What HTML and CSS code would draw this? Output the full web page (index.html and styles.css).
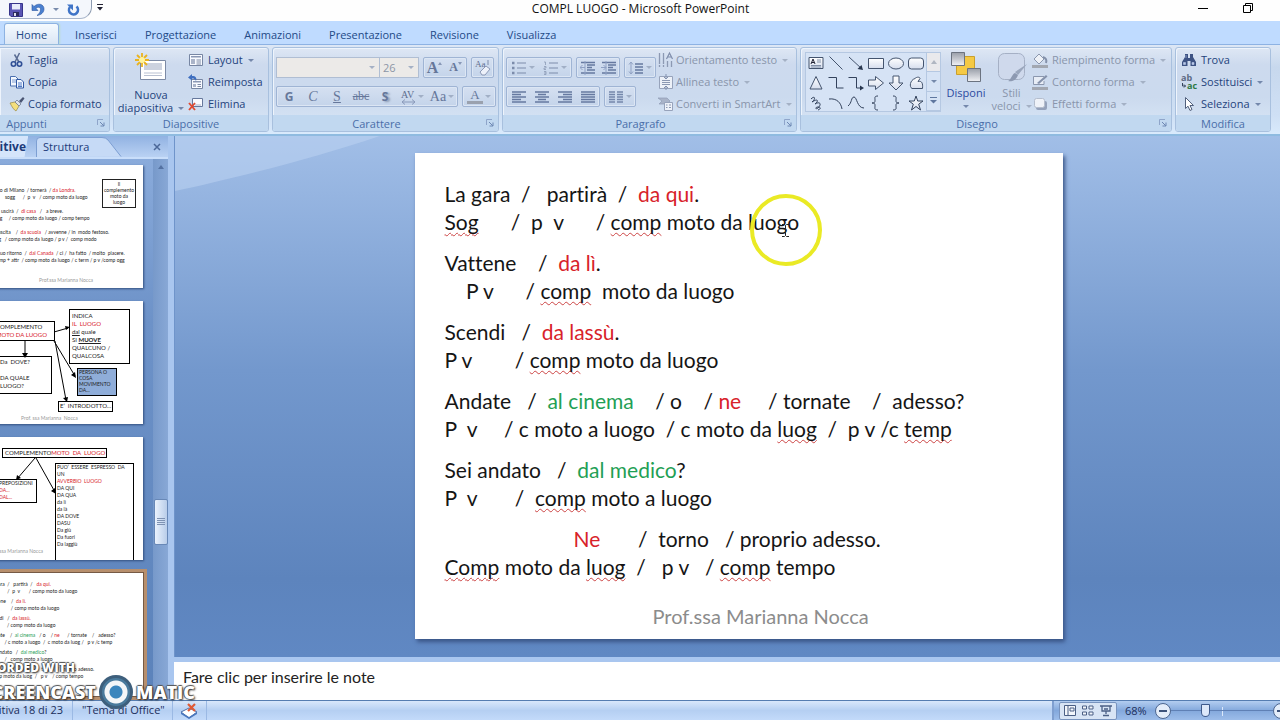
FILE: index.html
```
<!DOCTYPE html>
<html lang="it">
<head>
<meta charset="utf-8">
<title>COMPL LUOGO - Microsoft PowerPoint</title>
<link rel="stylesheet" href="styles.css">
</head>
<body>
<svg class="defs" aria-hidden="true">
  <defs>
    <linearGradient id="shade" x1="0" y1="0" x2="0" y2="1"><stop offset="0" stop-color="#fff"/><stop offset="1" stop-color="#d5dded"/></linearGradient>
    <linearGradient id="metal" x1="0" y1="0" x2="0" y2="1"><stop offset="0" stop-color="#999ea8"/><stop offset="1" stop-color="#f1f2f5"/></linearGradient>
    <symbol id="lines-left" viewBox="0 0 16 14"><path d="M1 2h14M1 4.500h9M1 7h14M1 9.500h9M1 12h14" stroke="#6679a0" stroke-width="1.400"/></symbol>
    <symbol id="lines-center" viewBox="0 0 16 14"><path d="M1 2h14M4 4.500h8M1 7h14M4 9.500h8M1 12h14" stroke="#6679a0" stroke-width="1.400"/></symbol>
    <symbol id="lines-right" viewBox="0 0 16 14"><path d="M1 2h14M6 4.500h9M1 7h14M6 9.500h9M1 12h14" stroke="#6679a0" stroke-width="1.400"/></symbol>
    <symbol id="lines-full" viewBox="0 0 16 14"><path d="M1 2h14M1 4.500h14M1 7h14M1 9.500h14M1 12h14" stroke="#6679a0" stroke-width="1.400"/></symbol>
    <symbol id="bullets" viewBox="0 0 16 14"><path d="M6 2h9M6 7h9M6 12h9" stroke="#7c8cab"/><path d="M1 2h2.500M1 7h2.500M1 12h2.500" stroke="#7c8cab" stroke-width="2.500"/></symbol>
    <symbol id="numbers" viewBox="0 0 16 14"><path d="M6 2h9M6 7h9M6 12h9" stroke="#7c8cab"/><path d="M1 1h1.500v3M1 5.500h2v1.500h-2v1.500h2M1 10.500h2v3h-2M1 12h2" stroke="#8c9ab5" fill="none" stroke-width=".8"/></symbol>
    <symbol id="indent-less" viewBox="0 0 16 14"><path d="M1 1.500h14M7 4h8M7 6.500h5M7 9h8M1 12h14" stroke="#6679a0" stroke-width="1.300"/><path d="M5 6.500H0M2.500 4L0 6.500 2.500 9M5 0v14" stroke="#8fa1c4" fill="none"/></symbol>
    <symbol id="indent-more" viewBox="0 0 16 14"><path d="M1 1.500h14M7 4h8M7 6.500h5M7 9h8M1 12h14" stroke="#6679a0" stroke-width="1.300"/><path d="M0 6.500h5M2.500 4L5 6.500 2.500 9M5 0v14" stroke="#8fa1c4" fill="none"/></symbol>
    <symbol id="spacing" viewBox="0 0 16 14"><path d="M7 3h8M7 6h8M7 9h8M7 12h8" stroke="#6679a0" stroke-width="1.300"/><path d="M3 1v12M1 3.500L3 1l2 2.500M1 10.500L3 13l2-2.500" stroke="#8fa1c4" fill="none"/></symbol>
    <symbol id="columns" viewBox="0 0 16 14"><path d="M1 2h6M1 4.500h6M1 7h6M1 9.500h6M1 12h6M9 2h6M9 4.500h6M9 7h6M9 9.500h6M9 12h6" stroke="#7487ab" stroke-width="1.400"/></symbol>
    <symbol id="launch" viewBox="0 0 8 8"><path d="M.5 6V.5H6" stroke="#8fa5ca" fill="none"/><path d="M3 3l4 4M7 3.500V7H3.500" stroke="#6d87b3" fill="none"/></symbol>
  </defs>
</svg>

<div class="app">
  <header class="titlebar">
    <div class="quick">
      <button aria-label="Salva"><svg width="14" height="14" viewBox="0 0 14 14"><path d="M.5.5h13v13H2l-1.500-1.500z" fill="#5a55b4" stroke="#37358a"/><path d="M3 1h8v5.500H3z" fill="#e8ecfa"/><path d="M4 9h6v4H4z" fill="#2b2a5e"/><path d="M5 10h2v3H5z" fill="#dde"/></svg></button>
      <button aria-label="Annulla"><svg width="14" height="14" viewBox="0 0 14 14"><path d="M1 1.500v6h6L5 5.500C7 3.500 9.500 4 9.500 6.500 9.500 9 8 11 6 12.500 10 12 13 9.500 13 6 13 1 7-.5 3 3.500z" fill="#4a80d0" stroke="#2a56a0" stroke-width=".6"/></svg></button>
      <i class="caret small"></i>
      <button aria-label="Ripeti" class="redo"><svg width="13" height="14" viewBox="0 0 13 14"><path d="M9.500 3.500a4.500 4.500 0 1 1-6.500.5" fill="none" stroke="#3f74c7" stroke-width="2.600"/><path d="M0 1.500h6v6z" fill="#3f74c7"/></svg></button>
    </div>
    <button class="customize" aria-label="Personalizza barra"><svg width="6" height="7" viewBox="0 0 6 7"><path d="M0 .5h6" stroke="#223"/><path d="M0 3h6L3 6.500z" fill="#223"/></svg></button>
    <h1 class="doc-title">COMPL LUOGO - Microsoft PowerPoint</h1>
    <div class="window-buttons">
      <button aria-label="Riduci a icona"><svg width="10" height="10" viewBox="0 0 10 10"><path d="M0 5.500h10" stroke="#000"/></svg></button>
      <button aria-label="Ripristina"><svg width="10" height="10" viewBox="0 0 10 10"><path d="M.5 2.500h7v7h-7zM2.500 2V.5h7v7H8" fill="none" stroke="#000"/></svg></button>
    </div>
  </header>

  <nav class="tabs">
    <button class="tab active">Home</button><button class="tab">Inserisci</button><button class="tab">Progettazione</button><button class="tab">Animazioni</button><button class="tab">Presentazione</button><button class="tab">Revisione</button><button class="tab">Visualizza</button>
  </nav>

  <div class="ribbon">
    <section class="group clipboard">
      <div class="tools column">
        <button class="cmd"><svg width="16" height="16" viewBox="0 0 16 16"><path d="M10.500 1L6 10M5.500 2.500L10 10" stroke="#5a6c92" stroke-width="1.500"/><circle cx="4.500" cy="12" r="2.200" fill="none" stroke="#2f4f96" stroke-width="1.600"/><circle cx="10.500" cy="12" r="2.200" fill="none" stroke="#2f4f96" stroke-width="1.600"/></svg>Taglia</button>
        <button class="cmd"><svg width="16" height="16" viewBox="0 0 16 16"><path d="M1.500 2.500h5l2.500 2.500v7H1.500z" fill="#f4f8ff" stroke="#4a6fb0"/><path d="M3 6h4M3 8h4" stroke="#7f9cd0"/><path d="M7.500 5.500h4.500l2.500 2.500v6H7.500z" fill="#f4f8ff" stroke="#2f57a3"/><path d="M9 9h4M9 11h4M9 12.500h4" stroke="#4f79c4"/></svg>Copia</button>
        <button class="cmd"><svg width="16" height="16" viewBox="0 0 16 16"><path d="M1 7l5-1 4 4-3 5C5 14 3 11 1 7z" fill="#f4df7d" stroke="#9a8a45" stroke-width=".7"/><path d="M6 6l2-2 4 4-2 2z" fill="#dfe3ea" stroke="#66708a" stroke-width=".7"/><path d="M10 5l4-4 1.500 1.500L12 7z" fill="#4a5572"/></svg>Copia formato</button>
      </div>
      <footer class="group-name"><span>Appunti</span><button aria-label="Opzioni Appunti"><svg width="8" height="8"><use href="#launch"/></svg></button></footer>
    </section>

    <section class="group slides">
      <div class="tools">
        <button class="big"><svg width="32" height="30" viewBox="0 0 32 30"><path d="M5.500 7.500h25v19h-25z" fill="#fff" stroke="#7c8aa5"/><path d="M9 10h18v7H9z" fill="#ccd2df"/><path d="M9 20h18M9 22.500h18" stroke="#b9c1d2"/><path d="M7 0v14M0 7h14M2 2l10 10M12 2L2 12" stroke="#eab31f" stroke-width="1.800"/><circle cx="7" cy="7" r="3" fill="#fff4a0"/></svg><span>Nuova<br>diapositiva<i class="caret"></i></span></button>
        <div class="column">
          <button class="cmd"><svg width="16" height="16" viewBox="0 0 16 16"><path d="M1.500 2.500h13v11h-13z" fill="#f8faff" stroke="#7786a3"/><path d="M3 4h10v1.500H3z" fill="#8b98b4"/><path d="M3 7h4v5H3z" fill="#aab4c9"/><path d="M8.500 8H13M8.500 10H13M8.500 12H13" stroke="#7d8aa6"/></svg><span>Layout<i class="caret"></i></span></button>
          <button class="cmd"><svg width="16" height="16" viewBox="0 0 16 16"><path d="M3.500 5.500h11v9h-11z" fill="#f8faff" stroke="#7786a3"/><path d="M5 7h8v1.500H5z" fill="#8b98b4"/><path d="M5 10h3v3H5z" fill="#aab4c9"/><path d="M9.500 10.500H13M9.500 12.500H13" stroke="#7d8aa6"/><path d="M0 3.500L4 0v2c4 0 5 2 4 5-1-2-2-2.500-4-2.500v2z" fill="#3f6fc0"/></svg>Reimposta</button>
          <button class="cmd"><svg width="16" height="16" viewBox="0 0 16 16"><path d="M4.500 2.500h10v8h-10z" fill="#f8faff" stroke="#66789c"/><path d="M7 9h6" stroke="#aab4c9"/><path d="M1 7l6 7M7 7l-6 7" stroke="#df4a32" stroke-width="1.900"/></svg>Elimina</button>
        </div>
      </div>
      <footer class="group-name"><span>Diapositive</span></footer>
    </section>

    <section class="group font">
      <div class="tools bars">
        <div class="bar-row">
          <div class="combo"><select class="font-name" aria-label="Tipo di carattere" disabled><option></option></select><i class="caret"></i></div><div class="combo joined"><select class="font-size" aria-label="Dimensione carattere" disabled><option>26</option></select><i class="caret"></i></div>
          <div class="bar apart"><button class="w22 grow" aria-label="Aumenta"><b>A</b><i class="caret up"></i></button><button class="w22 shrink" aria-label="Riduci"><b>A</b><i class="caret"></i></button></div>
          <div class="bar apart"><button class="w22" aria-label="Cancella formattazione"><svg width="18" height="18" viewBox="0 0 18 18"><text x="1" y="8" class="tiny-aa">Aa</text><path d="M14 1v5" stroke="#7d8cab"/><path d="M6 13l6-6 4 3-5 6H8z" fill="#edf1fa" stroke="#8c99b6"/></svg></button></div>
        </div>
        <div class="bar-row">
          <div class="bar"><button class="w24 bold">G</button><button class="w24 italic">C</button><button class="w24 under">S</button><button class="w24 strike">abc</button><button class="w24 bold shadow">S</button><button class="w30" aria-label="Spaziatura AV"><svg width="15" height="16" viewBox="0 0 15 16"><text x="0" y="9" class="av">AV</text><path d="M1 13h13M4 10.500L1 13l3 2.500M11 10.500l3 2.500-3 2.500" fill="none" stroke="#8a9abb"/></svg><i class="caret"></i></button><button class="w30 case">Aa<i class="caret"></i></button></div>
          <div class="bar apart"><button class="w32 color"><span>A</span><i class="caret"></i></button></div>
        </div>
      </div>
      <footer class="group-name"><span>Carattere</span><button aria-label="Opzioni Carattere"><svg width="8" height="8"><use href="#launch"/></svg></button></footer>
    </section>

    <section class="group paragraph">
      <div class="tools">
        <div class="bars">
          <div class="bar-row">
            <div class="bar"><button class="w32" aria-label="Elenco puntato"><svg width="16" height="14"><use href="#bullets"/></svg><i class="caret"></i></button><button class="w32" aria-label="Elenco numerato"><svg width="16" height="14"><use href="#numbers"/></svg><i class="caret"></i></button></div>
            <div class="bar apart"><button class="w22" aria-label="Riduci rientro"><svg width="16" height="14"><use href="#indent-less"/></svg></button><button class="w22" aria-label="Aumenta rientro"><svg width="16" height="14"><use href="#indent-more"/></svg></button></div>
            <div class="bar apart"><button class="w30" aria-label="Interlinea"><svg width="16" height="14"><use href="#spacing"/></svg><i class="caret"></i></button></div>
          </div>
          <div class="bar-row">
            <div class="bar"><button class="w23" aria-label="Sinistra"><svg width="16" height="14"><use href="#lines-left"/></svg></button><button class="w23" aria-label="Centra"><svg width="16" height="14"><use href="#lines-center"/></svg></button><button class="w23" aria-label="Destra"><svg width="16" height="14"><use href="#lines-right"/></svg></button><button class="w23" aria-label="Giustifica"><svg width="16" height="14"><use href="#lines-full"/></svg></button></div>
            <div class="bar apart"><button class="w30" aria-label="Colonne"><svg width="16" height="14"><use href="#columns"/></svg><i class="caret"></i></button></div>
          </div>
        </div>
        <div class="column">
          <button class="cmd" disabled><svg width="16" height="16" viewBox="0 0 16 16"><path d="M1.500 1v11M5.500 1v11M1.500 15v-2M5.500 15v-2M9.500 9v6M13.500 9v6" stroke="#8c99b3" stroke-width="1.300"/><path d="M8.500 7l3-6 3 6M9.500 5h4" fill="none" stroke="#7f8dab" stroke-width="1.200"/></svg><span>Orientamento testo<i class="caret"></i></span></button>
          <button class="cmd" disabled><svg width="16" height="16" viewBox="0 0 16 16"><path d="M1.500 2.500h13v12h-13z" fill="#edf1f8" stroke="#97a3bb"/><path d="M4 6.500h8M4 8.500h8M4 10.500h8" stroke="#8b98b2"/><path d="M8 0v5M8 12v4M6 3l2 2 2-2M6 14l2-2 2 2" stroke="#8291af" fill="none"/></svg><span>Allinea testo<i class="caret"></i></span></button>
          <button class="cmd" disabled><svg width="16" height="16" viewBox="0 0 16 16"><path d="M0 2h9l3 3-3 3H1l3-3z" fill="#a9b4c9" stroke="#8f9cb5" stroke-width=".7"/><path d="M6.500 6.500h8v8h-8z" fill="#eef2f9" stroke="#97a3bb"/><path d="M8 9h1.500M11 9h2M8 11.500h1.500M11 11.500h2" stroke="#8b98b2"/></svg><span>Converti in SmartArt<i class="caret"></i></span></button>
        </div>
      </div>
      <footer class="group-name"><span>Paragrafo</span><button aria-label="Opzioni Paragrafo"><svg width="8" height="8"><use href="#launch"/></svg></button></footer>
    </section>

    <section class="group drawing">
      <div class="tools">
        <div class="gallery">
          <div class="shapes">
            <button aria-label="Casella di testo"><svg width="16" height="16" viewBox="0 0 16 16"><path d="M1 2.500h14v11H1z" fill="url(#shade)" stroke="#44546e"/><path d="M3 9l2-5 2 5M4 7.500h2" fill="none" stroke="#223"/><path d="M9 5h4M9 7h4M3 10.500h10M3 12h10" stroke="#8391a9"/></svg></button>
            <button aria-label="Linea"><svg width="16" height="16" viewBox="0 0 16 16"><path d="M1.500 1.500l13 13" stroke="#44546e"/></svg></button>
            <button aria-label="Freccia"><svg width="16" height="16" viewBox="0 0 16 16"><path d="M1 2l13 12" stroke="#44546e"/><path d="M15 15l-1.500-5-4 4z" fill="#27364f"/></svg></button>
            <button aria-label="Rettangolo"><svg width="16" height="16" viewBox="0 0 16 16"><path d="M.5 3.500h15v10H.5z" fill="url(#shade)" stroke="#44546e"/></svg></button>
            <button aria-label="Ovale"><svg width="16" height="16" viewBox="0 0 16 16"><ellipse cx="8" cy="8.500" rx="7.500" ry="5.500" fill="url(#shade)" stroke="#44546e"/></svg></button>
            <button aria-label="Rettangolo arrotondato"><svg width="16" height="16" viewBox="0 0 16 16"><rect x=".5" y="3" width="15" height="11" rx="3" fill="url(#shade)" stroke="#44546e"/></svg></button>
            <button aria-label="Triangolo"><svg width="16" height="16" viewBox="0 0 16 16"><path d="M8 1.500l6 12.500H2z" fill="url(#shade)" stroke="#44546e"/></svg></button>
            <button aria-label="Connettore a gomito"><svg width="16" height="16" viewBox="0 0 16 16"><path d="M.5 2.500h8v10.500h7" fill="none" stroke="#33425c"/></svg></button>
            <button aria-label="Connettore con freccia"><svg width="16" height="16" viewBox="0 0 16 16"><path d="M.5 2.500h8v10.500h5" fill="none" stroke="#33425c"/><path d="M16 13l-4-2.500v5z" fill="#27364f"/></svg></button>
            <button aria-label="Freccia destra"><svg width="16" height="16" viewBox="0 0 16 16"><path d="M.5 5h7V1.500l8 6.500-8 6.500V11h-7z" fill="url(#shade)" stroke="#44546e"/></svg></button>
            <button aria-label="Freccia giù"><svg width="16" height="16" viewBox="0 0 16 16"><path d="M5 1v7H1l7 7 7-7h-4V1z" fill="url(#shade)" stroke="#44546e"/></svg></button>
            <button aria-label="Figura a mano libera"><svg width="16" height="16" viewBox="0 0 16 16"><path d="M7 3.500c2-2 5-1.500 5 0l-2 3c4-1 5 2 4.500 7H4C1 12 2 5 7 3.500z" fill="url(#shade)" stroke="#44546e"/></svg></button>
            <button aria-label="Scarabocchio"><svg width="16" height="16" viewBox="0 0 16 16"><path d="M3 4c4-4 5 0 1 3 6-4 7-1 3 2 5-3 7 0 3 4-3 2-3-1 0-1s3 2 0 3" fill="none" stroke="#33425c"/></svg></button>
            <button aria-label="Arco"><svg width="16" height="16" viewBox="0 0 16 16"><path d="M1 4c8-1 12 4 13 10" fill="none" stroke="#33425c"/></svg></button>
            <button aria-label="Curva"><svg width="16" height="16" viewBox="0 0 16 16"><path d="M0 11C4 8 3 2 6 2s3 11 10 11" fill="none" stroke="#33425c"/></svg></button>
            <button aria-label="Parentesi graffa aperta"><svg width="16" height="16" viewBox="0 0 16 16"><path d="M10 1C6 1 7 3 7 5s0 3-3 3c3 0 3 1 3 3s-1 4 3 4" fill="none" stroke="#33425c"/></svg></button>
            <button aria-label="Parentesi graffa chiusa"><svg width="16" height="16" viewBox="0 0 16 16"><path d="M5 1c4 0 3 2 3 4s0 3 3 3c-3 0-3 1-3 3s1 4-3 4" fill="none" stroke="#33425c"/></svg></button>
            <button aria-label="Stella"><svg width="16" height="16" viewBox="0 0 16 16"><path d="M8 1l1.700 5H15l-4.300 3.200L12.500 15 8 11.500 3.500 15l1.800-5.800L1 6h5.300z" fill="url(#shade)" stroke="#33425c"/></svg></button>
          </div>
          <div class="gallery-scroll"><button class="off" aria-label="Su"><i class="caret up"></i></button><button aria-label="Giù"><i class="caret"></i></button><button aria-label="Altro"><svg width="7" height="7" viewBox="0 0 7 7"><path d="M0 .5h7" stroke="#5f779f"/><path d="M0 3h7L3.500 6.500z" fill="#5f779f"/></svg></button></div>
        </div>
        <button class="big arrange"><svg width="32" height="32" viewBox="0 0 32 32"><path d="M6.500 5.500h18v18h-18z" fill="#f5c944" stroke="#caa02d"/><path d="M1.500 1.500h13v13h-13z" fill="url(#metal)" stroke="#6b7380"/><path d="M17.500 17.500h13v13h-13z" fill="url(#metal)" stroke="#6b7380"/></svg><span>Disponi<br><i class="caret"></i></span></button>
        <button class="big styles" disabled><svg width="32" height="32" viewBox="0 0 32 32"><rect x="2.500" y="2.500" width="26" height="26" rx="6" fill="#cfd9ec" stroke="#a5b0c5"/><path d="M31 13l-9 11-3-3z" fill="#9aa6bc"/><path d="M22 24c-2 6-7 7-10 6 3-1 4-7 7-8z" fill="#8d99b1"/></svg><span>Stili<br>veloci<i class="caret"></i></span></button>
        <div class="column">
          <button class="cmd" disabled><svg width="16" height="16" viewBox="0 0 16 16"><path d="M2 7l5-5 5 5-5 5z" fill="#eef1f7" stroke="#8b97ae"/><path d="M11 5c3 1 4 3 3 6" fill="none" stroke="#8491ab" stroke-width="2"/><path d="M0 13h16v3H0z" fill="#a2a7b1"/></svg><span>Riempimento forma<i class="caret"></i></span></button>
          <button class="cmd" disabled><svg width="16" height="16" viewBox="0 0 16 16"><path d="M12 2.500H1.500v8H12V7" fill="#e8edf6" stroke="#8b97ae"/><path d="M5 9l9-8 1.500 1.500L7 10z" fill="#8491ab"/><path d="M0 13h16v3H0z" fill="#a2a7b1"/></svg><span>Contorno forma<i class="caret"></i></span></button>
          <button class="cmd" disabled><svg width="16" height="16" viewBox="0 0 16 16"><rect x="4" y="5" width="11" height="9" rx="2" fill="#95a2bb"/><rect x="2.500" y="2.500" width="10" height="9" rx="2" fill="#eff2f8" stroke="#b4bdcd"/></svg><span>Effetti forma<i class="caret"></i></span></button>
        </div>
      </div>
      <footer class="group-name"><span>Disegno</span><button aria-label="Opzioni Disegno"><svg width="8" height="8"><use href="#launch"/></svg></button></footer>
    </section>

    <section class="group edit">
      <div class="tools column">
        <button class="cmd"><svg width="16" height="16" viewBox="0 0 16 16"><path d="M4 2h3v4h2V2h3v3l3 5v4H9.500V9h-3v5H1v-4l3-5z" fill="#3d5283"/><path d="M2.500 10.500h2v2h-2zM11 10.500h2v2h-2zM5 3v3" fill="#b9c8e8" stroke="#b9c8e8" stroke-width=".6"/></svg>Trova</button>
        <button class="cmd"><svg width="16" height="16" viewBox="0 0 16 16"><text x="0" y="7" class="ab">ab</text><text x="6" y="15" class="ac">ac</text><path d="M1.500 9v3h3M3 10.500L4.500 12 3 13.500" fill="none" stroke="#33425c"/></svg><span>Sostituisci<i class="caret"></i></span></button>
        <button class="cmd"><svg width="16" height="16" viewBox="0 0 16 16"><path d="M4.500 1.500v11l2.500-2.300 2 4.300 2-1-2-4h3.500z" fill="#fff" stroke="#51607c"/></svg><span>Seleziona<i class="caret"></i></span></button>
      </div>
      <footer class="group-name"><span>Modifica</span></footer>
    </section>
  </div>

  <div class="body">
    <aside class="outline">
      <div class="pane-tabs">
        <button class="pane-tab current">Diapositive</button>
        <button class="pane-tab other"><svg class="tab-shape" viewBox="0 0 86 20" preserveAspectRatio="none"><path d="M.5 20V4Q.5 .5 4 .5H66Q70 .5 72 3L85 19.500" fill="#c6daf6" stroke="#7d9fd3"/></svg><span>Struttura</span></button>
        <button class="pane-close" aria-label="Chiudi"><svg width="8" height="8" viewBox="0 0 8 8"><path d="M1 1l6 6M7 1L1 7" stroke="#4b6798" stroke-width="1.500"/></svg></button>
      </div>
      <div class="pane-body">
        <div class="thumbs">
          <article class="thumb lesson">
            <p>Il treno di Milano  / tornerà  / <em>da Londra.</em>
              sogg      /  p  v   / comp moto da luogo</p>
            <p>  Luca uscirà  /  <em>di casa</em>   /   a breve.
    sogg     / comp moto da luogo / comp tempo</p>
            <p>      L’uscita    /  <em>da scuola</em>   / avvenne / in  modo festoso.
   sogg   / comp moto da luogo / p v /  comp modo</p>
            <p>    Al suo ritorno  /  <em>dal Canada</em>  / ci /  ha fatto  / molto  piacere.
   c temp + attr  / comp moto da luogo / c term / p v /comp ogg</p>
            <div class="note-box">Il<br>complemento<br>moto da<br>luogo</div>
            <small>Prof.ssa Marianna Nocca</small>
          </article>
          <article class="thumb diagram">
            <svg class="wires" viewBox="0 0 164 123"><g fill="none" stroke="#000"><path d="M75 31l14-4M46 40v15M75 40l21 35M76 40l11 59"/></g><path d="M91 26l-5-1 1 4zM46 57l-3-5h6zM97 77l-5-3 4-3zM88 101l-4-4 5-1z"/></svg>
            <div class="box topic">COMPLEMENTO<br><em>MOTO DA LUOGO</em></div>
            <div class="box about">INDICA<br><em>IL &nbsp;LUOGO</em><br><u>dal</u> quale<br>SI <b><u>MUOVE</u></b><br>QUALCUNO /<br>QUALCOSA</div>
            <div class="box question">Da &nbsp;DOVE?<br><br>DA QUALE<br>LUOGO?</div>
            <div class="box filled">PERSONA O<br>COSA<br>MOVIMENTO<br>DA...</div>
            <div class="box intro">E’ &nbsp;INTRODOTTO...</div>
            <small>Prof. ssa Marianna &nbsp;Nocca</small>
          </article>
          <article class="thumb diagram second">
            <svg class="wires" viewBox="0 0 164 123"><g fill="none" stroke="#000"><path d="M56 21L38 42M57 21l19 34"/></g><path d="M37 43l1-5 4 3zM77 57l-5-3 4-3z"/></svg>
            <div class="box head">COMPLEMENTO<em>MOTO &nbsp;DA &nbsp;LUOGO</em></div>
            <div class="box prep">PREPOSIZIONI<br><em>DA...<br>DAL...</em></div>
            <div class="box list">PUO’ &nbsp;ESSERE &nbsp;ESPRESSO &nbsp;DA<br>UN<br><em>AVVERBIO &nbsp;LUOGO</em><br>DA QUI<br>DA QUA<br>da lì<br>da là<br>DA DOVE<br>DASU<br>Da giù<br>Da fuori<br>Da laggiù</div>
            <small>Prof.ssa Marianna Nocca</small>
          </article>
          <article class="thumb lesson selected">
            <p>La gara  /   partirà  /   <em>da qui.</em>
Sog        /  p  v       / comp moto da luogo</p>
            <p>Vattene    /  <em>da lì.</em>
   P v         / comp moto da luogo</p>
            <p>Scendi   /  <em>da lassù.</em>
P v         / comp moto da luogo</p>
            <p>Andate    /  <q>al cinema</q>   / o    / <em>ne</em>      / tornate    /   adesso?
P  v      / c moto a luogo  /  c moto da luog /   p v /c temp</p>
            <p>Sei andato   /  <q>dal medico</q>?
P  v      /   comp moto a luogo</p>
            <p>                          <em>Ne</em>      /  torno   / proprio adesso.
Comp moto da luog  /   p v    / comp tempo</p>
          </article>
        </div>
        <div class="scrollbar"><button aria-label="Scorri su"><i class="caret up"></i></button><div class="thumb-grip"></div></div>
      </div>
    </aside>

    <main class="editor">
      <div class="stage">
        <svg class="swoosh" viewBox="0 0 1106 520" preserveAspectRatio="none"><path d="M0 0H205C140 22 60 42 0 55z" fill="#c0d6f4" opacity=".5"/></svg>
        <article class="slide">
          <p>La gara  /   partirà  /  <em>da qui</em>.
<u>Sog</u>      /  p  v      / <u>comp</u> moto da luogo</p>
          <p>Vattene    /  <em>da lì</em>.
    P v      / <u>comp</u>  moto da luogo</p>
          <p>Scendi   /  <em>da lassù</em>.
P v        / <u>comp</u> moto da luogo</p>
          <p>Andate   /  <q>al cinema</q>    / o    / <em>ne</em>     / tornate    /  adesso?
P  v     / c moto a luogo  / c moto da <u>luog</u>  /  p v /c <u>temp</u></p>
          <p>Sei andato   /  <q>dal medico</q>?
P  v       /  <u>comp</u> moto a luogo</p>
          <p>                        <em>Ne</em>       /  torno   / proprio adesso.
<u>Comp</u> moto da <u>luog</u>  /   p v   / <u>comp</u> tempo</p>
          <footer>Prof.ssa Marianna Nocca</footer>
          <div class="pointer"><svg width="9" height="13" viewBox="0 0 9 13"><path d="M1 .5h2.500l1 1 1-1H8M4.500 1.500v10M1 12.500h2.500l1-1 1 1H8" fill="none" stroke="#222"/></svg></div>
        </article>
      </div>
      <textarea class="notes" aria-label="Note">Fare clic per inserire le note</textarea>
    </main>
  </div>

  <footer class="status">
    <span class="cell count">Diapositiva 18 di 23</span>
    <span class="cell theme">"Tema di Office"</span>
    <button class="cell spell" aria-label="Controllo ortografia"><svg width="18" height="16" viewBox="0 0 18 16"><path d="M1 9l8-4 8 4-8 6z" fill="#fff" stroke="#4b6ea8"/><path d="M1 9v2l8 5 8-5V9l-8 5z" fill="#4b78bd"/><path d="M8 1l7 7M15 1L8 8" stroke="#df5a36" stroke-width="2.200"/></svg></button>
    <span class="spacer"></span>
    <div class="zoombar">
      <div class="views">
        <button aria-label="Normale"><svg width="12" height="11" viewBox="0 0 12 11"><path d="M.5.5h11v10H.5zM4 1v9M6 3h4v3H6z" fill="#f3f6fb" stroke="#4b5f85"/></svg></button>
        <button aria-label="Sequenza diapositive"><svg width="12" height="11" viewBox="0 0 12 11"><path d="M.5 1h4v3h-4zM7 1h4v3H7zM.5 7h4v3h-4zM7 7h4v3H7z" fill="#f3f6fb" stroke="#4b5f85"/></svg></button>
        <button aria-label="Presentazione"><svg width="12" height="12" viewBox="0 0 12 12"><path d="M0 1h12M2 1v5h8V1M6 6v3M3 10.500h6M4 4h4" fill="none" stroke="#4b5f85" stroke-width="1.300"/></svg></button>
      </div>
      <output>68%</output>
      <button class="round" aria-label="Zoom indietro"><i class="minus"></i></button>
      <input type="range" min="0" max="100" value="32" aria-label="Zoom">
      <button class="round" aria-label="Zoom avanti"><i class="minus"></i></button>
    </div>
  </footer>

  <div class="watermark" aria-label="Recorded with Screencast-O-Matic">
    <span class="recorded">RECORDED WITH</span>
    <span class="brand"><span class="first">SCREENCAST</span><i class="disc"></i><span>MATIC</span></span>
  </div>
</div>
</body>
</html>
```
FILE: styles.css
```
* { box-sizing: border-box; }
body { margin: 0; font-family: "Open Sans", "Noto Sans", sans-serif; font-size: 11px; color: #24437c; }
button { font: inherit; color: inherit; background: none; border: 0; padding: 0; margin: 0; white-space: nowrap; }
svg { display: block; flex: none; overflow: visible; }
.defs { position: absolute; width: 0; height: 0; }
.app { position: relative; display: flex; flex-direction: column; height: 100vh; overflow: hidden; }

.caret { display: inline-block; width: 0; height: 0; border: 3px solid transparent; border-top-color: #6a7ea3; border-bottom: 0; margin-left: 5px; vertical-align: 2px; opacity: .9; }
.caret.up { border-top: 0; border-bottom: 4px solid #4f6b9b; }

/* Title bar */
.titlebar { display: flex; align-items: center; height: 21px; flex: none; background: #fefefe; position: relative; }
.quick { display: flex; align-items: center; gap: 8px; height: 21px; margin-top: -4px; padding: 3px 11px 0 9px; border-right: 1px solid #8d9bb0; border-bottom: 1px solid #a9b6cb; border-radius: 0 0 12px 0; background: #f4f7fc; }
.quick .caret { margin-left: 0; }
.customize { margin: -6px 0 0 5px; }
.doc-title { flex: 1; margin: 0; font-weight: 400; font-size: 12px; line-height: 17px; height: 21px; color: #111; text-align: center; padding-right: 20px; }
.window-buttons { display: flex; gap: 35px; padding: 0 27px 6px 0; }

/* Ribbon tabs */
.tabs { display: flex; height: 24px; flex: none; padding: 2px 0 0 4px; background: #bfdbff; border-bottom: 1px solid #8db2e3; }
.tab { padding: 0 13px; height: 21px; color: #234a87; border: 1px solid transparent; border-bottom: 0; }
.tab.active { padding: 0 11px; margin-right: 2px; background: linear-gradient(#f4faff, #dbe6f5); border-color: #8db2e3; border-radius: 3px 3px 0 0; box-shadow: 1px 0 2px #b9dcc9; }

.ribbon { display: flex; gap: 3px; height: 91px; flex: none; padding: 2px 0 2px; background: linear-gradient(#dde7f5, #c7d8ed 25%, #cfe0f5 80%, #d9eafc); border-bottom: 2px solid #8fbbe0; }
.group { display: flex; flex-direction: column; border: 1px solid #a8c0de; border-radius: 3px; box-shadow: inset 1px 1px #eef4fc; background: linear-gradient(#dee7f4, #cddaee 20%, #cbdaee 60%, #dae7f7); overflow: hidden; flex: none; }
.clipboard { width: 110px; border-left: 0; border-radius: 0 3px 3px 0; }
.slides { width: 156px; }
.font { width: 227px; }
.paragraph { width: 295px; }
.drawing { width: 372px; }
.edit { width: 96px; }
.tools { flex: 1; display: flex; min-height: 0; }
.column { display: flex; flex-direction: column; align-items: flex-start; padding-top: 1px; }
.cmd { display: flex; align-items: center; gap: 4px; height: 22px; line-height: 16px; }
.cmd:disabled, .big:disabled { color: #8995ab; }
.cmd:disabled .caret, .big:disabled .caret { border-top-color: #a0acc0; }
.clipboard .cmd { padding-left: 9px; gap: 3px; }
.edit .cmd { padding-left: 5px; }
.paragraph .cmd { gap: 2px; }
.group-name { display: flex; align-items: center; justify-content: center; height: 16px; flex: none; background: #c1d8f0; color: #4a6ea9; position: relative; }
.font .group-name, .paragraph .group-name, .drawing .group-name { padding-right: 18px; }
.clipboard .group-name { padding-right: 56px; }
.group-name button { position: absolute; right: 4px; top: 4px; }
.big { display: flex; flex-direction: column; align-items: center; line-height: 13px; text-align: center; gap: 3px; padding-top: 3px; }
.slides .big { width: 74px; padding-top: 5px; }
.slides .big span { margin-top: 2px; }
.arrange { width: 50px; color: #2b4ba0; }
.arrange .caret { margin: 0; }
.styles { width: 41px; }
.bars { display: flex; flex-direction: column; gap: 8px; padding: 9px 2px 0 3px; }
.bar-row { display: flex; }
.bar { display: flex; height: 21px; border: 1px solid #9fb4d4; border-radius: 2px; background: linear-gradient(#d5e0f1, #c4d4ea); box-shadow: inset 0 0 0 1px #dce6f4; color: #66779a; }
.bar button { display: flex; align-items: center; justify-content: center; line-height: 18px; }
.bar .caret, .combo .caret { margin-left: 2px; border-top-color: #9caac1; }
.apart { margin-left: 4px; }
.w22 { width: 21px; } .w23 { width: 23px; } .w24 { width: 24px; } .w30 { width: 30px; } .w32 { width: 32px; }
.bar .bold { font-weight: 700; font-size: 12px; }
.bar .italic { font: italic 14px "Liberation Serif", serif; }
.bar .under { font: 14px "Liberation Serif", serif; text-decoration: underline; }
.bar .strike { font: 12px "Liberation Serif", serif; text-decoration: line-through; }
.bar .shadow { text-shadow: 2px 1px 2px #8997b0; }
.bar .case { font: 14px "Liberation Serif", serif; }
.grow b { font: bold 16px "Liberation Serif", serif; }
.shrink b { font: bold 12px "Liberation Serif", serif; }
.bar .grow .caret, .bar .shrink .caret { margin: 0 0 9px; border-left-width: 2px; border-right-width: 2px; }
.bar .grow .caret { border-bottom: 3px solid #7f90b0; }
.bar .shrink .caret { border-top-color: #7f90b0; }
.color span { font: 13px/12px "Liberation Serif", serif; border-bottom: 3px solid #9aa1ae; padding: 0 3px; }
.tiny-aa { font: 9px "Liberation Serif", serif; fill: #5f6f8f; }
.av { font: 10px "Liberation Serif", serif; fill: #5f6f8f; }
.ab { font: bold 9px "Open Sans", sans-serif; fill: #5d6a85; }
.ac { font: bold 9px "Open Sans", sans-serif; fill: #2f7a45; }
.combo { position: relative; height: 21px; }
.combo .caret { position: absolute; right: 5px; top: 9px; }
.combo select { appearance: none; height: 21px; border: 1px solid #b0bed3; background: #eceae8; font: inherit; color: #8d96a6; padding: 0 3px; opacity: 1; border-radius: 0; }
.font-name { width: 104px; }
.font-size { width: 40px; }
.joined { margin-left: -1px; }
.gallery { display: flex; height: 60px; margin: 4px 0 0 4px; border: 1px solid #b5c8e2; background: #d6e3f5; }
.shapes { display: grid; grid-template-columns: repeat(6, 20px); grid-template-rows: repeat(3, 20px); }
.shapes button { display: flex; align-items: center; justify-content: center; }
.gallery-scroll { display: flex; flex-direction: column; width: 14px; border-left: 1px solid #b5c8e2; }
.gallery-scroll button { flex: 1; display: flex; align-items: center; justify-content: center; border-bottom: 1px solid #b5c8e2; }
.gallery-scroll .off { background: #e9e9ec; }
.gallery-scroll .off .caret { border-bottom-color: #a9b0bc; }
.gallery-scroll .caret { margin: 0; }

/* Slide list */
.body { display: flex; flex: 1; min-height: 0; background: #a9c6ef; }
.outline { display: flex; flex-direction: column; width: 168px; flex: none; }
.pane-tabs { display: flex; height: 23px; flex: none; position: relative; background: linear-gradient(#91b2e2, #b9d1f3); border-bottom: 2px solid #c9defa; }
.pane-tab { color: #1c3a7a; }
.current { width: 36px; display: flex; justify-content: flex-end; align-items: center; padding-right: 10px; font-weight: 700; font-size: 12px; background: linear-gradient(100deg, #d5e5fb 70%, transparent 72%); }
.other { position: relative; width: 86px; text-align: left; padding-left: 7px; }
.other span { position: relative; }
.tab-shape { position: absolute; left: 0; top: 1px; width: 86px; height: 20px; }
.pane-close { margin-left: auto; padding-right: 7px; }
.pane-body { display: flex; flex: 1; min-height: 0; }
.thumbs { flex: 1; display: flex; flex-direction: column; gap: 13px; padding: 6px 10px 0 0; align-items: flex-end; overflow: hidden; background: linear-gradient(#8aabdb, #6d92c8 30%, #5b82ba); font-family: Lato, sans-serif; }
.thumb { position: relative; flex: none; width: 164px; height: 123px; background: #fff; color: #222; font-size: 5px; line-height: 7px; box-shadow: 1px 1px 2px #33507f; }
.thumb em, .slide em { font-style: normal; color: #d8222a; }
.thumb q, .slide q { quotes: none; color: #1fa055; }
.thumb p { margin: 0 0 7px; white-space: pre; }
.lesson { padding: 22px 0 0 8px; }
.note-box { position: absolute; right: 7px; top: 14px; width: 34px; height: 29px; border: 1px solid #222; font-size: 5px; line-height: 6px; text-align: center; padding-top: 1px; }
.thumb small { position: absolute; left: 60px; bottom: 4px; font-size: 5px; line-height: 7px; color: #999; white-space: nowrap; }
.selected { padding: 8px 0 0 10px; box-shadow: 0 0 0 1px #765a45, 0 0 0 4px #b78f6d; }
.selected p { margin-bottom: 3px; }
.diagram { font-size: 6px; line-height: 8px; }
.wires { position: absolute; left: 0; top: 0; width: 164px; height: 123px; }
.box { position: absolute; border: 1px solid #000; padding: 0 2px; white-space: nowrap; }
.topic { left: 10px; top: 20px; width: 66px; height: 20px; padding: 1px 6px; }
.about { left: 90px; top: 8px; width: 61px; height: 55px; line-height: 8px; padding-top: 2px; }
.question { left: 8px; top: 55px; width: 65px; height: 38px; padding: 1px 12px; }
.filled { left: 98px; top: 67px; width: 40px; height: 28px; background: #8fadd9; font-size: 5px; line-height: 6px; padding: 0 1px; }
.intro { left: 79px; top: 100px; width: 55px; height: 11px; padding: 0 1px; }
.diagram small { left: 42px; bottom: 2px; }
.second { font-size: 5px; line-height: 7px; }
.head { left: 23px; top: 11px; width: 105px; height: 10px; padding: 0 2px; font-size: 6px; line-height: 8px; }
.prep { left: 10px; top: 42px; width: 48px; height: 24px; padding: 0 9px; }
.list { left: 76px; top: 26px; width: 79px; height: 97px; border-bottom: 0; padding: 0 1px; }
.diagram.second small { left: 10px; bottom: 5px; }
.scrollbar { width: 15px; flex: none; display: flex; flex-direction: column; align-items: center; background: linear-gradient(90deg, #7799ca, #88a8d6); }
.scrollbar button { height: 14px; }
.scrollbar .caret { margin: 0; }
.thumb-grip { width: 14px; height: 46px; margin-top: 326px; border: 1px solid #6888b7; border-radius: 2px; background: repeating-linear-gradient(#7f93b3 0 1px, transparent 1px 2px) center / 8px 8px no-repeat, linear-gradient(90deg, #eaf2fd, #b9cde9); }

/* Slide editor */
.editor { flex: 1; min-width: 0; display: flex; flex-direction: column; margin-left: 6px; }
.stage { position: relative; flex: 1; min-height: 0; display: flex; justify-content: center; padding: 17px 0 18px 22px; background: linear-gradient(#a1bee7, #7398cd 45%, #5d84bd 85%, #6088c3); border-left: 1px solid #6f94ca; }
.swoosh { position: absolute; left: 0; top: 0; width: 100%; height: 100%; }
.slide { position: relative; height: 100%; aspect-ratio: 4 / 3; padding: 27px 0 0 30px; background: #fff; color: #151515; font: 21px/28px Lato, sans-serif; font-variant-ligatures: none; box-shadow: 2px 3px 4px #3a5587; }
.slide p { margin: 0 0 13px; white-space: pre; }
.slide u { text-decoration: underline wavy #c44 1px; text-underline-offset: 2px; text-decoration-skip-ink: none; }
.slide footer { margin: 21px 0 0 208px; color: #8c8c8c; font-size: 20px; }
.pointer { position: absolute; left: 335px; top: 41px; width: 72px; height: 72px; border: 4px solid #eaea25; border-radius: 50%; display: flex; align-items: center; justify-content: center; }
.notes { height: 43px; flex: none; display: block; width: 100%; resize: none; border: solid #a9c6ef; border-width: 5px 0 0; outline: 0; margin: 0; padding: 5px 9px; overflow: hidden; background: #fff; color: #222; font: 16px/20px Lato, sans-serif; }

/* Status bar */
.status { display: flex; height: 20px; flex: none; background: linear-gradient(#d9e7fb, #b5cff2 50%, #c3dafa); border-top: 1px solid #567db1; color: #1c2f5c; line-height: 18px; }
.cell { border-right: 1px solid #9bb9e4; white-space: nowrap; }
.count { width: 73px; display: flex; justify-content: flex-end; padding-right: 9px; }
.theme { width: 100px; padding-left: 9px; }
.spell { width: 34px; padding-left: 7px; }
.spacer { flex: 1; }
.zoombar { display: flex; align-items: center; gap: 8px; margin-right: -9px; padding-left: 5px; border-left: 2px solid #7f9fd0; background: linear-gradient(#b3cdf0, #83a8dc 50%, #9dbdea); }
.views { display: flex; gap: 6px; height: 18px; align-items: center; padding: 0 4px; border: 1px solid #7893be; border-radius: 2px; background: #d8e4f5; }
.zoombar output { width: 22px; }
.round { width: 16px; height: 16px; border: 1px solid #4d6690; border-radius: 50%; background: #e4edfa; display: flex; align-items: center; justify-content: center; flex: none; }
.minus { width: 8px; height: 2px; background: #3d537b; }
.zoombar input { appearance: none; width: 102px; height: 16px; margin: 0 -8px; background: linear-gradient(#5f80b5, #5f80b5) center / 100% 1px no-repeat, linear-gradient(#dbe8fb, #dbe8fb) 51px 4px / 1px 9px no-repeat; }
.zoombar input::-webkit-slider-thumb { appearance: none; width: 9px; height: 13px; border: 1px solid #3d5a8c; border-radius: 1px 1px 5px 5px; background: #dce8fa; }

/* Recorder watermark */
.watermark { position: absolute; left: 0; bottom: 11px; width: 204px; height: 48px; font-family: "Open Sans", sans-serif; font-weight: 800; color: #fff; text-shadow: 1px 1px 2px #222, -1px 0 1px #555, 0 -1px 1px #555; pointer-events: none; }
.recorded { display: flex; justify-content: flex-end; width: 75px; font-size: 12px; line-height: 14px; white-space: nowrap; }
.brand { display: flex; align-items: center; gap: 3px; font-size: 18px; height: 34px; }
.first { width: 96px; flex: none; display: flex; justify-content: flex-end; }
.disc { width: 34px; height: 34px; border-radius: 50%; flex: none; border: 3px solid #3e5f7c; background: radial-gradient(circle, #3c86bd 0 6px, #f4f6f8 7px 11px, #4a7a9c 12px); }
```
